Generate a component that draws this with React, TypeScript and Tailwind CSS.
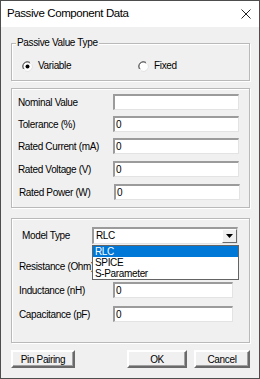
import React from "react";

const Radio: React.FC<{ checked?: boolean }> = ({ checked }) => (
  <svg width="11" height="11" viewBox="0 0 11 11" className="shrink-0">
    <circle cx="5.5" cy="5.5" r="5" fill="#ffffff" />
    <path d="M1.2 8 A5 5 0 0 1 8 1.2" stroke="#8a8a8a" strokeWidth="1" fill="none" />
    <path d="M2.2 8.2 A4 4 0 0 1 8.2 2.2" stroke="#5a5a5a" strokeWidth="1" fill="none" />
    <path d="M9.8 3 A5 5 0 0 1 3 9.8" stroke="#e3e3e3" strokeWidth="1" fill="none" />
    {checked && <circle cx="5.5" cy="5.5" r="2" fill="#000000" />}
  </svg>
);

const Field: React.FC<{ value?: string; w: string }> = ({ value, w }) => (
  <div
    className={`${w} h-[16px] border-t-2 border-l-2 border-b border-r border-t-[#9b9b9b] border-l-[#9b9b9b] border-b-[#e3e3e3] border-r-[#e3e3e3] bg-white pl-[1px] leading-[13px]`}
  >
    {value}
  </div>
);

const Button: React.FC<{ label: string; w: string; className?: string }> = ({ label, w, className }) => (
  <div
    className={`${w} ${className ?? ""} h-[18px] flex items-center justify-center bg-[#f0f0f0] border-2 border-t-white border-l-white border-b-[#6a6a6a] border-r-[#6a6a6a] shadow-[inset_-1px_-1px_0_#a0a0a0]`}
  >
    {label}
  </div>
);

const groupBox = "border border-[#b9b9b9] shadow-[inset_1px_1px_0_#ffffff,1px_1px_0_#ffffff]";

export default function App() {
  const ratings = [
    { label: "Nominal Value", value: "", cls: "" },
    { label: "Tolerance (%)", value: "0", cls: "" },
    { label: "Rated Current (mA)", value: "0", cls: "" },
    { label: "Rated Voltage (V)", value: "0", cls: "mt-[1px]" },
    { label: "Rated Power (W)", value: "0", cls: "mt-[1px] pl-[1px]" },
  ];

  return (
    <div className="w-[260px] h-[379px] border border-[#4d4d4d] bg-[#f0f0f0] flex flex-col font-['Liberation_Sans',Arial,sans-serif] text-[10px] tracking-[-0.35px] text-black overflow-hidden">
      {/* Title bar */}
      <div className="h-[26px] shrink-0 bg-white flex items-center justify-between pl-[6px] pr-[8px]">
        <span className="text-[11.5px] tracking-[-0.4px]">Passive Component Data</span>
        <svg width="10" height="10" viewBox="0 0 10 10">
          <path d="M0.5 0.5 L9.5 9.5 M9.5 0.5 L0.5 9.5" stroke="#222" strokeWidth="1" />
        </svg>
      </div>

      <div className="flex flex-col pl-[10px] pr-[9px]">
        {/* Passive Value Type */}
        <div className={`relative mt-[16px] h-[38px] ${groupBox}`}>
          <span className="absolute left-[4px] top-[-7px] px-[1px] bg-[#f0f0f0] leading-[12px]">
            Passive Value Type
          </span>
          <div className="flex items-center pl-[10px] pt-[16px] leading-[12px]">
            <div className="flex items-center gap-[5px] w-[116px]">
              <Radio checked />
              <span>Variable</span>
            </div>
            <div className="flex items-center gap-[5px]">
              <Radio />
              <span>Fixed</span>
            </div>
          </div>
        </div>

        {/* Ratings */}
        <div className={`mt-[7px] h-[120px] ${groupBox} flex flex-col gap-[6px] pt-[5px] pl-[6px]`}>
          {ratings.map((r) => (
            <div key={r.label} className={`flex items-center h-[16px] ${r.cls}`}>
              <span className="w-[95px] shrink-0">{r.label}</span>
              <Field value={r.value} w="w-[126px]" />
            </div>
          ))}
        </div>

        {/* Model */}
        <div className={`mt-[10px] h-[125px] ${groupBox} flex flex-col pt-[8px]`}>
          <div className="flex items-center pl-[10px]">
            <span className="w-[70px] shrink-0">Model Type</span>
            <div className="relative">
              <div className="w-[146px] h-[17px] flex border-t-2 border-l-2 border-b border-r border-t-[#9b9b9b] border-l-[#9b9b9b] border-b-[#e3e3e3] border-r-[#e3e3e3] bg-white">
                <span className="flex-1 pl-[2px] leading-[14px]">RLC</span>
                <div className="w-[15px] h-[14px] bg-[#f0f0f0] border border-t-white border-l-white border-b-[#6a6a6a] border-r-[#6a6a6a] flex items-center justify-center">
                  <svg width="7" height="4" viewBox="0 0 7 4">
                    <path d="M0 0 H7 L3.5 4 Z" fill="#000" />
                  </svg>
                </div>
              </div>
              {/* open dropdown list */}
              <div className="absolute left-0 top-[18px] w-[147px] z-10 border border-[#646464] bg-white flex flex-col leading-[11px]">
                <div className="h-[11px] bg-[#0078d7] text-white pl-[2px]">RLC</div>
                <div className="h-[11px] pl-[2px]">SPICE</div>
                <div className="h-[11px] pl-[2px]">S-Parameter</div>
              </div>
            </div>
          </div>

          <div className="flex flex-col gap-[8px] mt-[14px] pl-[7px]">
            <div className="flex items-center h-[16px]">
              <span className="w-[94px] shrink-0 whitespace-nowrap overflow-hidden">Resistance (Ohm)</span>
              <Field w="w-[120px]" />
            </div>
            <div className="flex items-center h-[16px]">
              <span className="w-[94px] shrink-0">Inductance (nH)</span>
              <Field value="0" w="w-[120px]" />
            </div>
            <div className="flex items-center h-[16px]">
              <span className="w-[94px] shrink-0">Capacitance (pF)</span>
              <Field value="0" w="w-[120px]" />
            </div>
          </div>
        </div>

        {/* Buttons */}
        <div className="flex mt-[7px]">
          <Button label="Pin Pairing" w="w-[64px]" />
          <Button label="OK" w="w-[60px]" className="ml-auto" />
          <Button label="Cancel" w="w-[56px]" className="ml-[7px]" />
        </div>
      </div>
    </div>
  );
}
